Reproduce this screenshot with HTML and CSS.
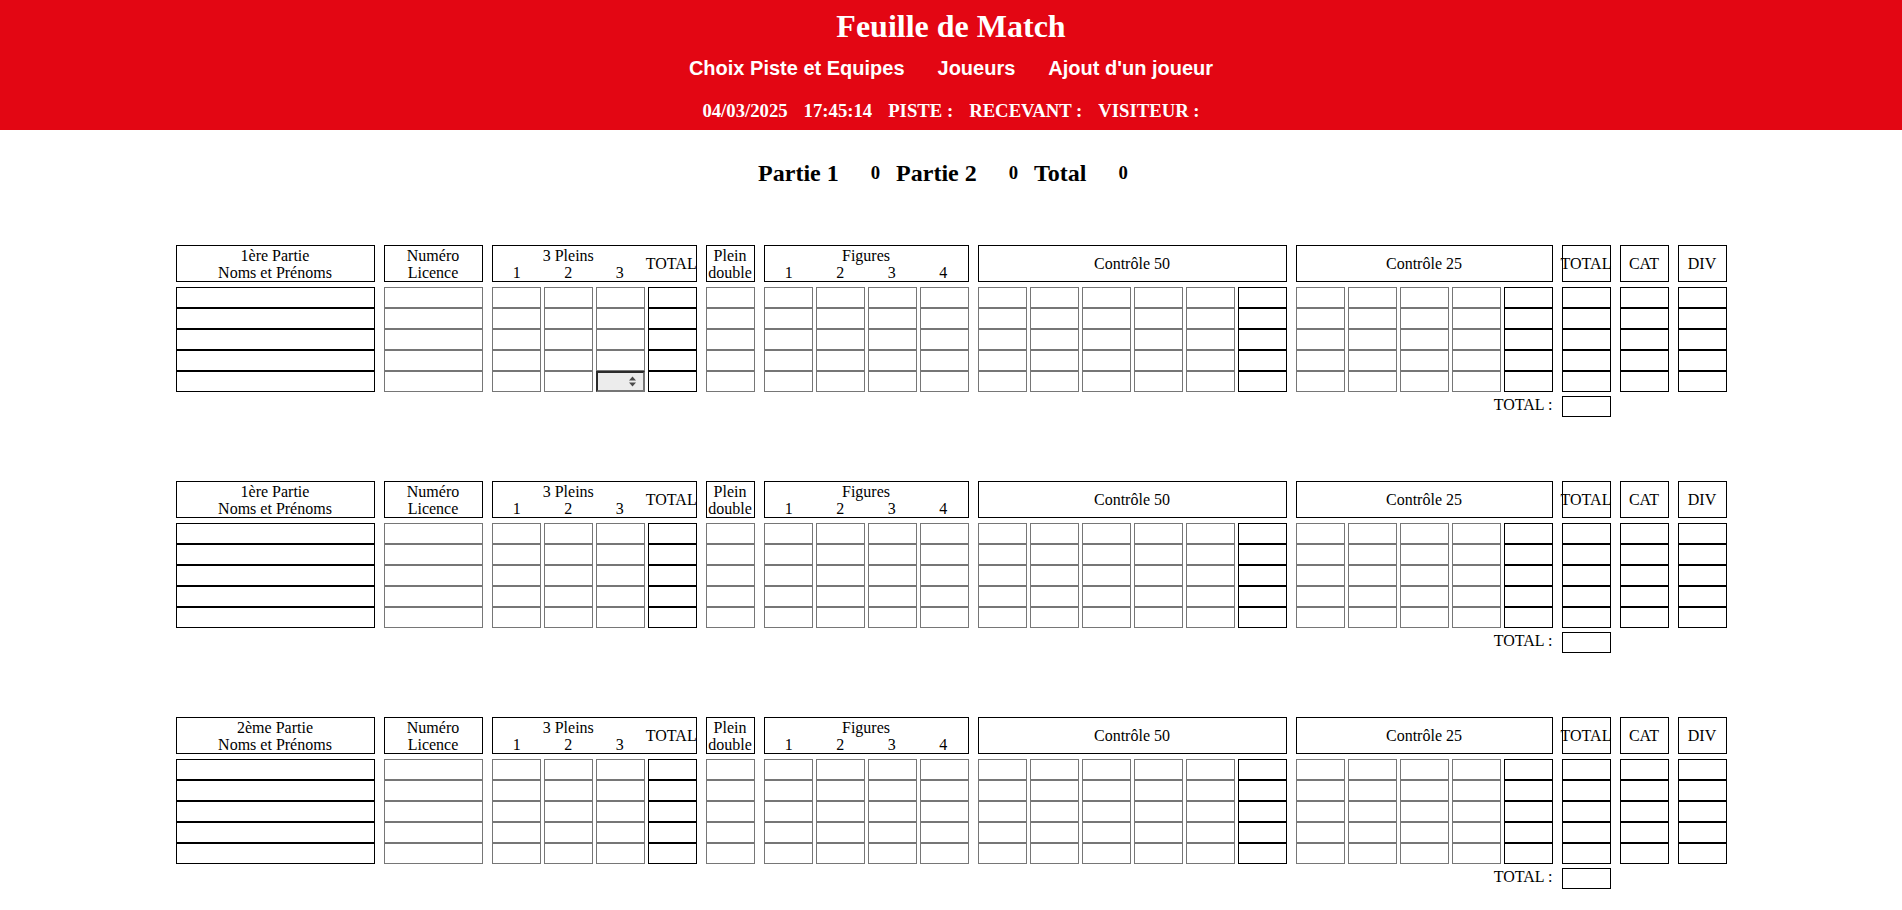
FILE: index.html
```html
<!DOCTYPE html>
<html lang="fr">
<head>
<meta charset="utf-8">
<title>Feuille de Match</title>
<link rel="stylesheet" href="styles.css">
</head>
<body>
<header class="top">
  <h1>Feuille de Match</h1>
  <nav class="nav">
    <a href="#">Choix Piste et Equipes</a>
    <a href="#">Joueurs</a>
    <a href="#">Ajout d'un joueur</a>
  </nav>
  <div class="info">
    <span>04/03/2025</span>
    <span>17:45:14</span>
    <span>PISTE :</span>
    <span>RECEVANT :</span>
    <span>VISITEUR :</span>
  </div>
</header>

<section class="scores">
  <div class="score"><span class="lbl">Partie 1</span><span class="val">0</span></div>
  <div class="score"><span class="lbl">Partie 2</span><span class="val">0</span></div>
  <div class="score"><span class="lbl">Total</span><span class="val">0</span></div>
</section>

<main class="sheet">
  <div class="block">
    <div class="group g-name"><div class="head">1ère Partie<br>Noms et Prénoms</div><div class="cells" data-cols="1" data-black="0"></div></div>
    <div class="group g-lic"><div class="head">Numéro<br>Licence</div><div class="cells" data-cols="1"></div></div>
    <div class="group g4"><div class="head hgrid"><span class="span3">3 Pleins</span><span class="rs2">TOTAL</span><span class="r2">1</span><span class="r2">2</span><span class="r2">3</span></div><div class="cells" data-cols="4" data-black="3" data-spin="4,2"></div></div>
    <div class="group g1"><div class="head">Plein<br>double</div><div class="cells" data-cols="1"></div></div>
    <div class="group g4"><div class="head hgrid"><span class="span4">Figures</span><span class="r2">1</span><span class="r2">2</span><span class="r2">3</span><span class="r2">4</span></div><div class="cells" data-cols="4"></div></div>
    <div class="group g6"><div class="head">Contrôle 50</div><div class="cells" data-cols="6" data-black="5"></div></div>
    <div class="group g5"><div class="head">Contrôle 25</div><div class="cells" data-cols="5" data-black="4"></div><div class="foot foot-label">TOTAL :</div></div>
    <div class="group g1"><div class="head">TOTAL</div><div class="cells" data-cols="1" data-black="0"></div><div class="foot"><input class="cell b" type="text"></div></div>
    <div class="group g1"><div class="head">CAT</div><div class="cells" data-cols="1" data-black="0"></div></div>
    <div class="group g1"><div class="head">DIV</div><div class="cells" data-cols="1" data-black="0"></div></div>
  </div>

  <div class="block">
    <div class="group g-name"><div class="head">1ère Partie<br>Noms et Prénoms</div><div class="cells" data-cols="1" data-black="0"></div></div>
    <div class="group g-lic"><div class="head">Numéro<br>Licence</div><div class="cells" data-cols="1"></div></div>
    <div class="group g4"><div class="head hgrid"><span class="span3">3 Pleins</span><span class="rs2">TOTAL</span><span class="r2">1</span><span class="r2">2</span><span class="r2">3</span></div><div class="cells" data-cols="4" data-black="3"></div></div>
    <div class="group g1"><div class="head">Plein<br>double</div><div class="cells" data-cols="1"></div></div>
    <div class="group g4"><div class="head hgrid"><span class="span4">Figures</span><span class="r2">1</span><span class="r2">2</span><span class="r2">3</span><span class="r2">4</span></div><div class="cells" data-cols="4"></div></div>
    <div class="group g6"><div class="head">Contrôle 50</div><div class="cells" data-cols="6" data-black="5"></div></div>
    <div class="group g5"><div class="head">Contrôle 25</div><div class="cells" data-cols="5" data-black="4"></div><div class="foot foot-label">TOTAL :</div></div>
    <div class="group g1"><div class="head">TOTAL</div><div class="cells" data-cols="1" data-black="0"></div><div class="foot"><input class="cell b" type="text"></div></div>
    <div class="group g1"><div class="head">CAT</div><div class="cells" data-cols="1" data-black="0"></div></div>
    <div class="group g1"><div class="head">DIV</div><div class="cells" data-cols="1" data-black="0"></div></div>
  </div>

  <div class="block">
    <div class="group g-name"><div class="head">2ème Partie<br>Noms et Prénoms</div><div class="cells" data-cols="1" data-black="0"></div></div>
    <div class="group g-lic"><div class="head">Numéro<br>Licence</div><div class="cells" data-cols="1"></div></div>
    <div class="group g4"><div class="head hgrid"><span class="span3">3 Pleins</span><span class="rs2">TOTAL</span><span class="r2">1</span><span class="r2">2</span><span class="r2">3</span></div><div class="cells" data-cols="4" data-black="3"></div></div>
    <div class="group g1"><div class="head">Plein<br>double</div><div class="cells" data-cols="1"></div></div>
    <div class="group g4"><div class="head hgrid"><span class="span4">Figures</span><span class="r2">1</span><span class="r2">2</span><span class="r2">3</span><span class="r2">4</span></div><div class="cells" data-cols="4"></div></div>
    <div class="group g6"><div class="head">Contrôle 50</div><div class="cells" data-cols="6" data-black="5"></div></div>
    <div class="group g5"><div class="head">Contrôle 25</div><div class="cells" data-cols="5" data-black="4"></div><div class="foot foot-label">TOTAL :</div></div>
    <div class="group g1"><div class="head">TOTAL</div><div class="cells" data-cols="1" data-black="0"></div><div class="foot"><input class="cell b" type="text"></div></div>
    <div class="group g1"><div class="head">CAT</div><div class="cells" data-cols="1" data-black="0"></div></div>
    <div class="group g1"><div class="head">DIV</div><div class="cells" data-cols="1" data-black="0"></div></div>
  </div>
</main>
<script src="app.js"></script>
</body>
</html>
```

FILE: styles.css
```css
* { box-sizing: border-box; }

body {
  margin: 0;
  background: #fff;
  color: #000;
  font-family: "Liberation Serif", "Times New Roman", serif;
}

.top {
  background: #e30613;
  color: #fff;
  text-align: center;
  padding: 8px 0 9px;
}

.top h1 {
  margin: 0;
  font-size: 32px;
  line-height: 36px;
  font-weight: bold;
}

.nav {
  display: flex;
  justify-content: center;
  gap: 33px;
  margin-top: 13px;
  font-family: "Liberation Sans", Arial, sans-serif;
  font-weight: bold;
  font-size: 20px;
  line-height: 23px;
}

.nav a {
  color: #fff;
  text-decoration: none;
}

.info {
  display: flex;
  justify-content: center;
  gap: 16px;
  margin-top: 20px;
  font-size: 18.72px;
  line-height: 21px;
  font-weight: bold;
}

.scores {
  display: flex;
  justify-content: center;
  margin-top: 29px;
  line-height: 28px;
  font-weight: bold;
}

.score {
  display: flex;
  align-items: flex-start;
}

.score .lbl { font-size: 24px; }

.score .val {
  font-size: 18.72px;
  margin: 0 16px 0 32px;
}

.sheet {
  width: 1551px;
  margin: 58px auto 0;
}

.block {
  display: flex;
  gap: 9px;
  align-items: flex-start;
}

.block + .block { margin-top: 64px; }

.group {
  flex: none;
  display: flex;
  flex-direction: column;
}

.g-name { width: 199px; }
.g-lic { width: 99px; }
.g1 { width: 49px; }
.g4 { width: 205px; }
.g5 { width: 257px; }
.g6 { width: 309px; }

.head {
  height: 37px;
  border: 1px solid #000;
  display: flex;
  align-items: center;
  justify-content: center;
  text-align: center;
  font-size: 16px;
  line-height: 17px;
  white-space: nowrap;
}

.head.hgrid {
  display: grid;
  grid-template-columns: repeat(4, minmax(0, 1fr));
  grid-template-rows: 17px 17px;
  column-gap: 3px;
  align-content: center;
}

.hgrid > span { justify-self: center; }
.hgrid .span3 { grid-column: 1 / 4; grid-row: 1; }
.hgrid .span4 { grid-column: 1 / 5; grid-row: 1; }
.hgrid .rs2 { grid-column: 4; grid-row: 1 / 3; align-self: center; }
.hgrid .r2 { grid-row: 2; }

.cells {
  display: grid;
  grid-auto-rows: 21px;
  column-gap: 3px;
  margin-top: 5px;
  grid-template-columns: minmax(0, 1fr);
}

.g4 .cells { grid-template-columns: repeat(4, minmax(0, 1fr)); }
.g5 .cells { grid-template-columns: repeat(5, minmax(0, 1fr)); }
.g6 .cells { grid-template-columns: repeat(6, minmax(0, 1fr)); }

.cell {
  display: block;
  width: 100%;
  height: 21px;
  margin: 0;
  padding: 0 2px;
  border: 1px solid #767676;
  border-radius: 0;
  background: #fff;
  font: inherit;
  outline: none;
}

.cell.b { border-color: #000; }

.cell.spin {
  display: flex;
  align-items: center;
  justify-content: flex-end;
  padding-right: 7px;
  background: #ececec;
  border-width: 2px;
  border-style: solid;
  border-color: #2b2b2b #767676 #767676 #2b2b2b;
}

.spin svg { display: block; }

.foot {
  margin-top: 4px;
  height: 21px;
}

.foot-label {
  text-align: right;
  font-size: 16px;
  line-height: 18px;
}
```

FILE: app.js
```js
document.querySelectorAll('.cells').forEach(function (g) {
  var n = parseInt(g.getAttribute('data-cols'), 10);
  var black = (g.getAttribute('data-black') || '').split(',').filter(function (s) { return s !== ''; }).map(Number);
  var spin = g.getAttribute('data-spin');
  var sr = -1, sc = -1;
  if (spin) { sr = +spin.split(',')[0]; sc = +spin.split(',')[1]; }
  for (var r = 0; r < 5; r++) {
    for (var c = 0; c < n; c++) {
      var el;
      if (r === sr && c === sc) {
        el = document.createElement('div');
        el.className = 'cell spin';
        el.innerHTML = '<svg width="7" height="11" viewBox="0 0 7 11"><path d="M0 4.5 L3.5 0.5 L7 4.5 Z M0 6.5 L3.5 10.5 L7 6.5 Z" fill="#4a4a4a"/></svg>';
      } else {
        el = document.createElement('input');
        el.type = 'text';
        el.className = 'cell' + (black.indexOf(c) >= 0 ? ' b' : '');
      }
      g.appendChild(el);
    }
  }
});
```
